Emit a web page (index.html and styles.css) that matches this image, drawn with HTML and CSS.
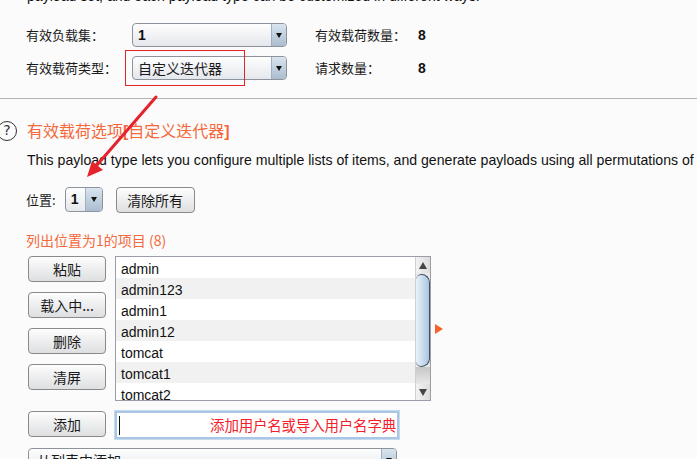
FILE: index.html
```html
<!DOCTYPE html>
<html>
<head>
<meta charset="utf-8">
<link rel="stylesheet" href="styles.css">
</head>
<body>
<div class="page">
  <div class="clip-top"><div class="clip-text">payload set, and each payload type can be customized in different ways.</div></div>

  <div class="set-grid">
    <div class="lbl">有效负载集：</div>
    <div class="select big"><div class="val latin">1</div><div class="dd"><span class="tri"></span></div></div>
    <div></div>
    <div class="lbl">有效载荷数量：</div>
    <div class="num">8</div>

    <div class="lbl">有效载荷类型：</div>
    <div class="select big"><div class="val cjk">自定义迭代器</div><div class="dd"><span class="tri"></span></div></div>
    <div></div>
    <div class="lbl">请求数量：</div>
    <div class="num">8</div>
  </div>

  <div class="sep"></div>

  <div class="title-row">
    <span class="help">?</span>
    <span class="title">有效载荷选项<b class="br">[</b>自定义迭代器<b class="br">]</b></span>
  </div>
  <div class="desc">This payload type lets you configure multiple lists of items, and generate payloads using all permutations of</div>

  <div class="pos-row">
    <span class="lbl">位置:</span>
    <div class="select small"><div class="val latin">1</div><div class="dd"><span class="tri"></span></div></div>
    <button class="btn wide">清除所有</button>
  </div>

  <div class="list-label">列出位置为1的项目 (8)</div>

  <div class="list-area">
    <div class="btn-col">
      <button class="btn">粘贴</button>
      <button class="btn">载入中...</button>
      <button class="btn">删除</button>
      <button class="btn">清屏</button>
    </div>
    <div class="listbox">
      <div class="rows">
        <div class="row">admin</div>
        <div class="row alt">admin123</div>
        <div class="row">admin1</div>
        <div class="row alt">admin12</div>
        <div class="row">tomcat</div>
        <div class="row alt">tomcat1</div>
        <div class="row">tomcat2</div>
        <div class="row alt">tomcat123</div>
      </div>
      <div class="sb">
        <div class="sb-btn"><span class="tri-up"></span></div>
        <div class="sb-thumb"></div>
        <div class="sb-shade"></div>
        <div class="sb-btn"><span class="tri-down"></span></div>
      </div>
    </div>
    <span class="marker"></span>
  </div>

  <div class="add-row">
    <button class="btn">添加</button>
    <div class="field"><span class="caret"></span><span class="hint">添加用户名或导入用户名字典</span></div>
  </div>

  <div class="select from-list"><div class="val cjk">从列表中添加...</div><div class="dd"><span class="tri"></span></div></div>

  <div class="red-box"></div>
  <svg class="arrow" width="697" height="459" viewBox="0 0 697 459">
    <line x1="156" y1="97" x2="97" y2="165" stroke="#e5232b" stroke-width="3" stroke-linecap="round"/>
    <polygon points="87,177 92,161 103,170" fill="#e5232b"/>
  </svg>
</div>
</body>
</html>
```
FILE: styles.css
```css
* { box-sizing: border-box; }
html, body { margin: 0; padding: 0; }
body {
  background: #fbfbfb;
  font-family: "Noto Sans CJK SC", "Liberation Sans", sans-serif;
  color: #1a1a1a;
  width: 697px;
  height: 459px;
  overflow: hidden;
}
.page { position: relative; width: 697px; height: 459px; overflow: hidden; }

.clip-top { height: 5px; overflow: hidden; padding-left: 27px; }
.clip-text {
  font-family: "Liberation Sans", sans-serif;
  font-size: 14.1px;
  line-height: 16px;
  margin-top: -12px;
  white-space: nowrap;
  color: #111;
}

.set-grid {
  display: grid;
  grid-template-columns: 106px 155px 28px 103px auto;
  grid-auto-rows: 24px;
  row-gap: 9px;
  padding-left: 26px;
  margin-top: 18px;
  align-items: center;
}
.lbl { font-size: 13px; line-height: 18px; color: #1a1a1a; white-space: nowrap; }
.num { font-family: "Liberation Sans", sans-serif; font-size: 14px; font-weight: bold; color: #111; }

.select {
  display: flex;
  height: 24px;
  border: 1px solid #8d939b;
  border-radius: 4px;
  background: linear-gradient(#fefefe, #e4e7ec);
  overflow: hidden;
}
.select .val { flex: 1; padding-left: 5px; line-height: 22px; white-space: nowrap; overflow: hidden; }
.select .val.latin { font-family: "Liberation Sans", sans-serif; font-size: 14px; font-weight: bold; color: #111; }
.select .val.cjk { font-size: 14px; color: #1a1a1a; }
.select .dd {
  width: 15px;
  border-left: 1px solid #9fb0c2;
  background: linear-gradient(#d9e4ef, #aabdcf);
  display: flex;
  align-items: center;
  justify-content: center;
}
.tri { width: 0; height: 0; border-left: 3.5px solid transparent; border-right: 3.5px solid transparent; border-top: 5px solid #111; }

.sep { height: 1px; background: #b3b3b3; margin-top: 18px; }

.title-row { display: flex; align-items: center; height: 20px; margin-top: 22px; }
.help {
  width: 20px; height: 20px;
  margin-left: -3px;
  border: 1.5px solid #333;
  border-radius: 50%;
  font-family: "DejaVu Sans", sans-serif;
  font-size: 14px;
  line-height: 17px;
  text-align: center;
  color: #333;
}
.title { margin-left: 10px; font-size: 16px; line-height: 20px; color: #f3693b; white-space: nowrap; }
.br { font-family: "Liberation Sans", sans-serif; font-weight: bold; }

.desc {
  margin-top: 11px;
  padding-left: 27px;
  font-family: "Liberation Sans", sans-serif;
  font-size: 14.1px;
  line-height: 17px;
  white-space: nowrap;
  color: #111;
}

.pos-row { display: flex; align-items: center; margin-top: 18px; padding-left: 26px; height: 25px; }
.select.small { width: 38px; height: 25px; margin-left: 9px; }
.select.small .val { padding-left: 5px; }
.select.small .dd { width: 17px; }

.btn {
  width: 78px;
  height: 26px;
  padding: 0;
  border: 1px solid #8a8a8a;
  border-radius: 4px;
  background: linear-gradient(#fdfdfd, #dedfe1);
  font-family: "Noto Sans CJK SC", "Liberation Sans", sans-serif;
  font-size: 14px;
  color: #1a1a1a;
  line-height: 24px;
}
.btn.wide { width: 79px; margin-left: 13px; }

.list-label { margin-top: 19px; padding-left: 26px; font-size: 14px; line-height: 18px; color: #f3693b; }

.list-area { display: flex; align-items: flex-start; margin-top: 7px; padding-left: 28px; }
.btn-col { display: flex; flex-direction: column; gap: 10px; }
.listbox {
  display: flex;
  width: 316px;
  height: 145px;
  margin-left: 9px;
  border: 1px solid #9a9ea6;
  background: #fff;
  overflow: hidden;
}
.rows { flex: 1; overflow: hidden; }
.row {
  height: 21px;
  padding-left: 5px;
  font-family: "Liberation Sans", sans-serif;
  font-size: 14px;
  line-height: 25px;
  color: #111;
  background: #fff;
}
.row.alt { background: #f1f1f1; }

.sb { width: 15px; display: flex; flex-direction: column; background: #e9e9e9; border-left: 1px solid #d0d0d0; }
.sb-btn { height: 16px; display: flex; align-items: center; justify-content: center; background: linear-gradient(to right, #f2f2f2, #dcdcdc); }
.tri-up { width: 0; height: 0; border-left: 4px solid transparent; border-right: 4px solid transparent; border-bottom: 7px solid #444; }
.tri-down { width: 0; height: 0; border-left: 4px solid transparent; border-right: 4px solid transparent; border-top: 7px solid #444; }
.sb-thumb {
  height: 93px;
  margin-top: 1px;
  border: 1px solid #3f5063;
  border-left: none;
  border-radius: 6px 9px 9px 6px;
  background: linear-gradient(to right, #eaf2fa, #c4d8ec 60%, #aac4de);
}
.sb-shade { flex: 1; background: linear-gradient(#c6c6c6, #e8e8e8); }

.marker {
  align-self: center;
  margin-left: 4px;
  width: 0; height: 0;
  border-top: 5px solid transparent;
  border-bottom: 5px solid transparent;
  border-left: 8px solid #f4622e;
}

.add-row { display: flex; align-items: flex-start; margin-top: 10px; padding-left: 28px; }
.field {
  display: flex;
  align-items: center;
  justify-content: space-between;
  width: 284px;
  height: 28px;
  margin-left: 9px;
  border: 2px solid #a9c6e4;
  outline: 1px solid #c7d9ec;
  background: #fff;
  padding: 0 1px 0 2px;
}
.caret { width: 1px; height: 19px; background: #111; }
.hint { font-size: 14.5px; line-height: 20px; color: #f4202a; white-space: nowrap; letter-spacing: -0.2px; }

.select.from-list { width: 369px; height: 24px; margin-left: 28px; margin-top: 9px; }
.select.from-list .val { padding-left: 8px; }

.red-box {
  position: absolute;
  left: 125px; top: 50px;
  width: 120px; height: 36px;
  border: 1px solid #e3242b;
}
.arrow { position: absolute; left: 0; top: 0; pointer-events: none; }
```
